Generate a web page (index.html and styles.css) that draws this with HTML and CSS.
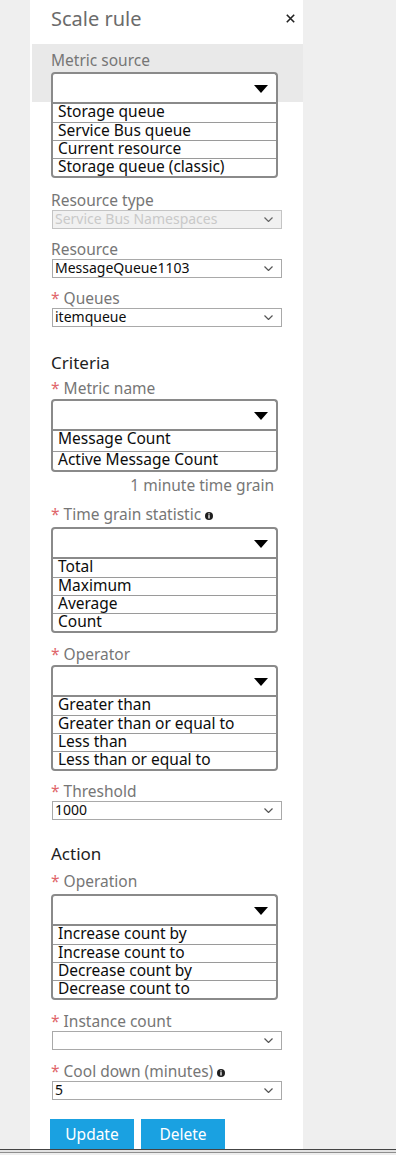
FILE: index.html
```html
<!DOCTYPE html>
<html lang="en">
<head>
<meta charset="utf-8">
<title>Scale rule</title>
<link rel="stylesheet" href="styles.css">
</head>
<body>
<div class="page">
  <div class="panel">
    <header class="head">
      <h1 class="title">Scale rule</h1>
      <button class="close" aria-label="Close">
        <svg width="9" height="9" viewBox="0 0 9 9"><path d="M0.8 0.8 L8.2 8.2 M8.2 0.8 L0.8 8.2" stroke="#222" stroke-width="1.6" fill="none"/></svg>
      </button>
    </header>

    <div class="band">
      <div class="label label--band">Metric source</div>
      <div class="dd-head"><span class="caret"></span></div>
    </div>
    <ul class="dd-list">
      <li>Storage queue</li>
      <li>Service Bus queue</li>
      <li>Current resource</li>
      <li>Storage queue (classic)</li>
    </ul>

    <div class="field field--first">
      <div class="label">Resource type</div>
      <div class="select select--disabled">Service Bus Namespaces<svg class="chev" width="9" height="5" viewBox="0 0 9 5"><path d="M0.5 0.5 L4.5 4.5 L8.5 0.5" stroke="#666" stroke-width="1.2" fill="none"/></svg></div>
    </div>
    <div class="field">
      <div class="label">Resource</div>
      <div class="select">MessageQueue1103<svg class="chev" width="9" height="5" viewBox="0 0 9 5"><path d="M0.5 0.5 L4.5 4.5 L8.5 0.5" stroke="#555" stroke-width="1.2" fill="none"/></svg></div>
    </div>
    <div class="field">
      <div class="label"><span class="req">*</span> Queues</div>
      <div class="select">itemqueue<svg class="chev" width="9" height="5" viewBox="0 0 9 5"><path d="M0.5 0.5 L4.5 4.5 L8.5 0.5" stroke="#555" stroke-width="1.2" fill="none"/></svg></div>
    </div>

    <h2 class="section section--criteria">Criteria</h2>

    <div class="field field--after-heading">
      <div class="label label--dd"><span class="req">*</span> Metric name</div>
      <div class="dropdown">
        <div class="dd-head"><span class="caret"></span></div>
        <ul class="dd-list dd-list--tall">
          <li>Message Count</li>
          <li>Active Message Count</li>
        </ul>
      </div>
    </div>
    <div class="hint">1 minute time grain</div>

    <div class="field">
      <div class="label label--wide"><span class="req">*</span> Time grain statistic<svg class="info" width="8" height="8" viewBox="0 0 8 8"><circle cx="4" cy="4" r="4" fill="#1e1e1e"/><rect x="3.35" y="1.3" width="1.3" height="1.2" fill="#fff"/><rect x="3.35" y="3.1" width="1.3" height="3.4" fill="#fff"/></svg></div>
      <div class="dropdown">
        <div class="dd-head"><span class="caret"></span></div>
        <ul class="dd-list">
          <li>Total</li>
          <li>Maximum</li>
          <li>Average</li>
          <li>Count</li>
        </ul>
      </div>
    </div>

    <div class="field field--dd">
      <div class="label label--dd"><span class="req">*</span> Operator</div>
      <div class="dropdown">
        <div class="dd-head"><span class="caret"></span></div>
        <ul class="dd-list">
          <li>Greater than</li>
          <li>Greater than or equal to</li>
          <li>Less than</li>
          <li>Less than or equal to</li>
        </ul>
      </div>
    </div>

    <div class="field">
      <div class="label"><span class="req">*</span> Threshold</div>
      <div class="select">1000<svg class="chev" width="9" height="5" viewBox="0 0 9 5"><path d="M0.5 0.5 L4.5 4.5 L8.5 0.5" stroke="#555" stroke-width="1.2" fill="none"/></svg></div>
    </div>

    <h2 class="section section--action">Action</h2>

    <div class="field field--after-action">
      <div class="label label--wide"><span class="req">*</span> Operation</div>
      <div class="dropdown">
        <div class="dd-head"><span class="caret"></span></div>
        <ul class="dd-list">
          <li>Increase count by</li>
          <li>Increase count to</li>
          <li>Decrease count by</li>
          <li>Decrease count to</li>
        </ul>
      </div>
    </div>

    <div class="field field--dd">
      <div class="label"><span class="req">*</span> Instance count</div>
      <div class="select"><svg class="chev" width="9" height="5" viewBox="0 0 9 5"><path d="M0.5 0.5 L4.5 4.5 L8.5 0.5" stroke="#555" stroke-width="1.2" fill="none"/></svg></div>
    </div>
    <div class="field field--dd">
      <div class="label"><span class="req">*</span> Cool down (minutes)<svg class="info" width="8" height="8" viewBox="0 0 8 8"><circle cx="4" cy="4" r="4" fill="#1e1e1e"/><rect x="3.35" y="1.3" width="1.3" height="1.2" fill="#fff"/><rect x="3.35" y="3.1" width="1.3" height="3.4" fill="#fff"/></svg></div>
      <div class="select">5<svg class="chev" width="9" height="5" viewBox="0 0 9 5"><path d="M0.5 0.5 L4.5 4.5 L8.5 0.5" stroke="#555" stroke-width="1.2" fill="none"/></svg></div>
    </div>

    <div class="actions">
      <button class="btn">Update</button>
      <button class="btn">Delete</button>
    </div>
  </div>
  <div class="bottom-rule"></div>
</div>
</body>
</html>
```

FILE: styles.css
```css
* { box-sizing: border-box; }

html, body {
  margin: 0;
  padding: 0;
  background: #efefef;
}

body {
  font-family: "Noto Sans", "Open Sans", sans-serif;
  color: #111;
}

.page {
  width: 396px;
  height: 1155px;
  overflow: hidden;
}

.panel {
  margin-left: 30px;
  width: 273px;
  background: #fff;
  padding-left: 21px;
}

.head {
  display: flex;
  justify-content: space-between;
  align-items: flex-start;
  height: 44px;
  padding: 7px 8px 0 0;
}

.title {
  margin: 0;
  font-size: 20px;
  line-height: 24px;
  font-weight: 400;
  color: #6b6b6b;
}

.close {
  border: 0;
  background: none;
  padding: 0;
  margin-top: 7px;
  width: 9px;
  height: 9px;
  display: block;
}
.close svg { display: block; }

.band {
  margin-left: -19px;
  padding: 7px 0 0 19px;
  background: #e9e9e9;
  height: 58px;
}

.label {
  height: 18px;
  font-size: 15.5px;
  line-height: 18px;
  color: #767676;
  margin-bottom: 1px;
  white-space: nowrap;
}
.label--band { margin-bottom: 3px; }
.label--dd { margin-bottom: 2px; }
.label--wide { margin-bottom: 4px; }

.req {
  color: #e0666b;
  font-size: inherit;
}

.info {
  display: inline-block;
  margin-left: 4px;
  vertical-align: 0px;
}

.dropdown { width: 227px; }

.dd-head {
  width: 227px;
  height: 30px;
  border: 2px solid #8a8a8a;
  border-bottom: 0;
  border-radius: 4px 4px 0 0;
  background: #fff;
  display: flex;
  justify-content: flex-end;
  align-items: center;
  padding-right: 8px;
}

.caret {
  width: 0;
  height: 0;
  border-left: 7.5px solid transparent;
  border-right: 7.5px solid transparent;
  border-top: 8px solid #000;
  margin-top: 2px;
}

.dd-list {
  list-style: none;
  margin: 0;
  padding: 0;
  width: 227px;
  border: 2px solid #8a8a8a;
  border-radius: 0 0 4px 4px;
}

.dd-list li {
  height: 18px;
  line-height: 14px;
  padding-left: 5px;
  font-size: 15.5px;
  color: #0c0c0c;
  white-space: nowrap;
}
.dd-list li + li { border-top: 1px solid #9a9a9a; }

.dd-list--tall li { height: 19.5px; line-height: 15px; }

.field { margin-top: 11px; }
.field--first { margin-top: 13px; }
.field--after-heading { margin-top: 5px; }
.field--after-action { margin-top: 7px; }
.field--dd { margin-top: 12px; }

.select {
  margin-left: 1px;
  width: 230px;
  height: 19px;
  border: 1px solid #a9a9a9;
  background: #fff;
  font-size: 14px;
  line-height: 15px;
  padding-left: 2px;
  color: #0c0c0c;
  display: flex;
  align-items: flex-start;
  justify-content: space-between;
  padding-right: 8px;
}
.select--disabled {
  background: #f1f1f1;
  color: #c9c9c9;
  border-color: #c4c4c4;
}
.chev {
  flex: none;
  margin-left: auto;
  margin-top: 6px;
}

.section {
  margin: 0;
  height: 22px;
  font-size: 17px;
  line-height: 22px;
  font-weight: 400;
  color: #1e1e1e;
}
.section--criteria { margin-top: 25px; }
.section--action { margin-top: 23px; }

.hint {
  width: 227px;
  height: 18px;
  text-align: right;
  padding-right: 4px;
  margin-top: 4px;
  font-size: 15.5px;
  line-height: 18px;
  color: #777;
}

.actions {
  display: flex;
  gap: 7px;
  margin-top: 19px;
  margin-left: -1px;
}

.btn {
  width: 84px;
  height: 30px;
  border: 0;
  padding: 0;
  background: #1aa1e1;
  color: #fff;
  font-family: "Noto Sans", "Open Sans", sans-serif;
  font-size: 15.5px;
  line-height: 30px;
}

.bottom-rule {
  height: 6px;
  border-top: 1px solid #444;
  background: linear-gradient(#e2e2e2 0 2px, #8e8e8e 2px 3px, #eeeeee 3px);
}
```
